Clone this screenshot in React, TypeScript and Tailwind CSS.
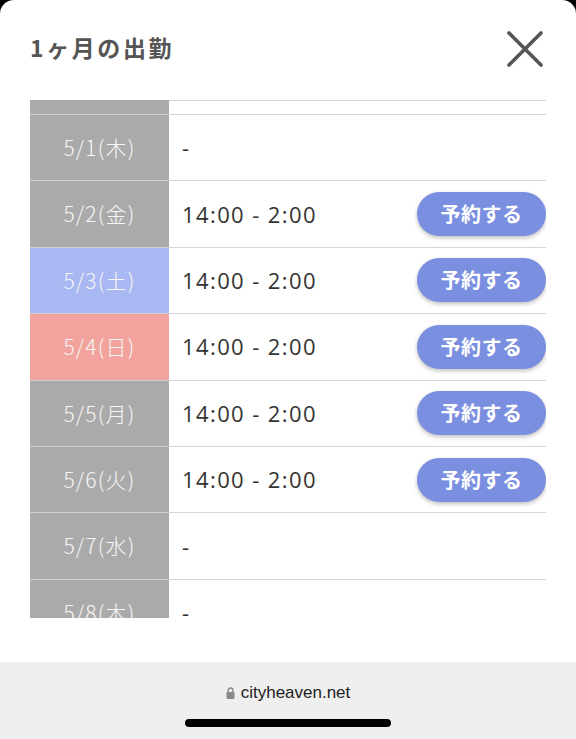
import React from "react";

type Day = {
  date: string;
  time: string | null;
  kind: "normal" | "sat" | "sun";
};

const days: Day[] = [
  { date: "5/1(木)", time: null, kind: "normal" },
  { date: "5/2(金)", time: "14:00 - 2:00", kind: "normal" },
  { date: "5/3(土)", time: "14:00 - 2:00", kind: "sat" },
  { date: "5/4(日)", time: "14:00 - 2:00", kind: "sun" },
  { date: "5/5(月)", time: "14:00 - 2:00", kind: "normal" },
  { date: "5/6(火)", time: "14:00 - 2:00", kind: "normal" },
  { date: "5/7(水)", time: null, kind: "normal" },
  { date: "5/8(木)", time: null, kind: "normal" },
];

const dateBg = {
  normal: "bg-[#aaaaaa]",
  sat: "bg-[#a9b8f2]",
  sun: "bg-[#f2a39d]",
};

function Row({ day }: { day: Day }) {
  return (
    <div className="flex h-[66.4px] shrink-0">
      <div
        className={`${dateBg[day.kind]} w-[139px] shrink-0 border-t border-[#cfcfcf] flex items-center justify-center text-[21px] font-light tracking-[1.2px] text-[#f6f6f6]`}
      >
        {day.date}
      </div>
      <div className="flex-1 border-t border-[#d6d6d6] flex items-center justify-between pl-[13px]">
        <span
          className="text-[22px] tracking-[1.4px] text-[#333]"
          style={{ fontFamily: '"Open Sans", "Noto Sans CJK JP", sans-serif' }}
        >
          {day.time ?? "-"}
        </span>
        {day.time && (
          <button
            type="button"
            className="w-[129px] h-[44px] rounded-full bg-[#7b8fe1] text-white text-[20px] font-bold tracking-[0.5px] shadow-[0_2px_4px_rgba(0,0,0,0.25)] flex items-center justify-center"
          >
            予約する
          </button>
        )}
      </div>
    </div>
  );
}

export default function App() {
  return (
    <div
      className="w-[576px] h-[739px] bg-black overflow-hidden"
      style={{ fontFamily: '"Noto Sans CJK JP", "Noto Sans", sans-serif' }}
    >
      <div className="h-full bg-white rounded-t-[14px] flex flex-col">
        <div className="h-[100px] shrink-0 flex items-start justify-between pl-[30px] pr-[33px] pt-[28px]">
          <h1 className="text-[23px] font-bold tracking-[2.6px] text-[#555] leading-[38px]">1ヶ月の出勤</h1>
          <svg width="36" height="36" viewBox="0 0 36 36" className="mt-[3px]">
            <path d="M2 2 L34 34 M34 2 L2 34" stroke="#555" strokeWidth="3.6" strokeLinecap="round" />
          </svg>
        </div>

        <div className="mx-[30px] h-[518px] shrink-0 overflow-hidden flex flex-col">
          <div className="flex h-[14px] shrink-0">
            <div className="w-[139px] bg-[#aaaaaa]" />
            <div className="flex-1 border-t border-[#d6d6d6]" />
          </div>
          {days.map((d) => (
            <Row key={d.date} day={d} />
          ))}
        </div>

        <div className="flex-1 bg-white" />

        <div className="h-[77px] shrink-0 bg-[#efefef] flex flex-col items-center">
          <div
            className="mt-[18px] flex items-center gap-[6px] text-[17px] text-[#222]"
            style={{ fontFamily: '"Liberation Sans", Arial, sans-serif' }}
          >
            <svg width="9" height="12" viewBox="0 0 9 12">
              <path d="M2 5 V3.5 a2.5 2.5 0 0 1 5 0 V5" stroke="#8a8a8a" strokeWidth="1.4" fill="none" />
              <rect x="0.5" y="5" width="8" height="7" rx="1.2" fill="#8a8a8a" />
            </svg>
            <span>cityheaven.net</span>
          </div>
          <div className="mt-[13px] w-[206px] h-[8px] rounded-full bg-black" />
        </div>
      </div>
    </div>
  );
}
